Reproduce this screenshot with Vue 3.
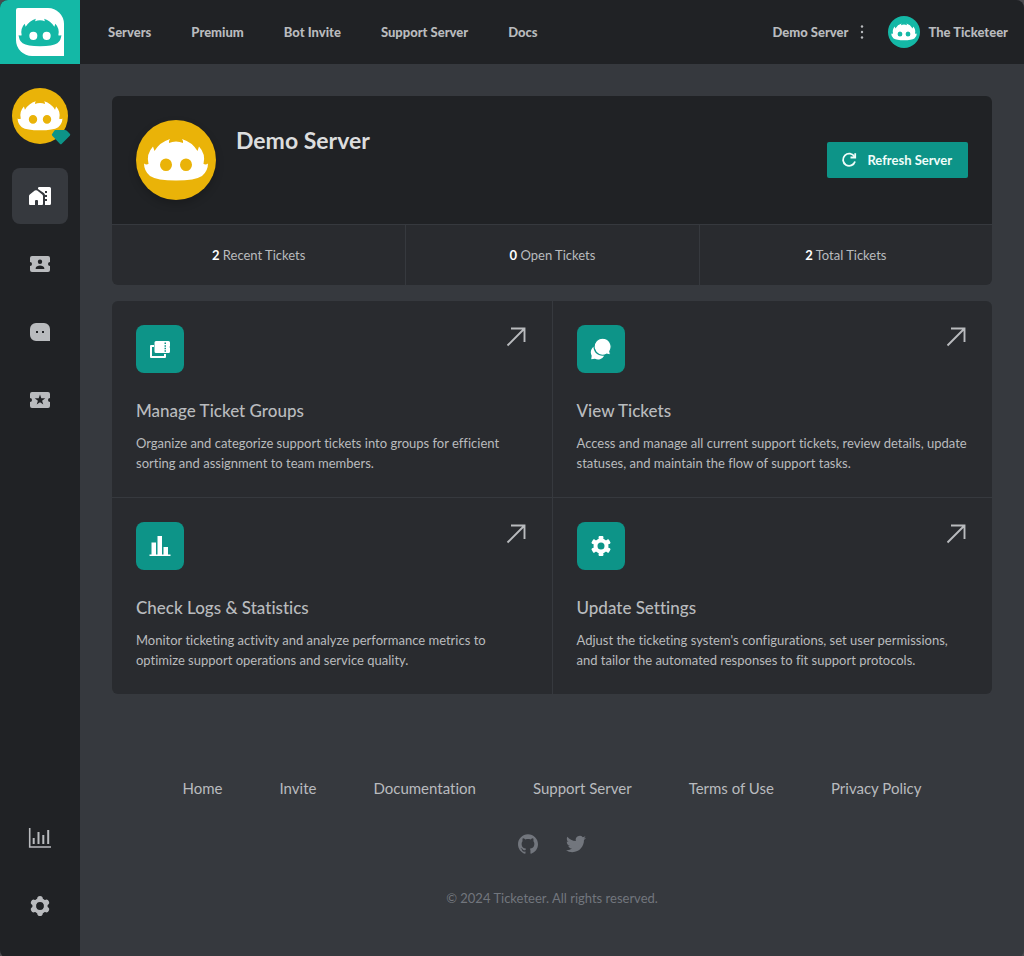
<script setup>
import { h } from 'vue'

const navLinks = ['Servers', 'Premium', 'Bot Invite', 'Support Server', 'Docs']
const footerLinks = ['Home', 'Invite', 'Documentation', 'Support Server', 'Terms of Use', 'Privacy Policy']
const stats = [
  { count: 2, label: 'Recent Tickets' },
  { count: 0, label: 'Open Tickets' },
  { count: 2, label: 'Total Tickets' }
]
const features = [
  {
    icon: 'groups',
    title: 'Manage Ticket Groups',
    text: 'Organize and categorize support tickets into groups for efficient sorting and assignment to team members.'
  },
  {
    icon: 'chats',
    title: 'View Tickets',
    text: 'Access and manage all current support tickets, review details, update statuses, and maintain the flow of support tasks.'
  },
  {
    icon: 'bars',
    title: 'Check Logs & Statistics',
    text: 'Monitor ticketing activity and analyze performance metrics to optimize support operations and service quality.'
  },
  {
    icon: 'cog',
    title: 'Update Settings',
    text: "Adjust the ticketing system's configurations, set user permissions, and tailor the automated responses to fit support protocols."
  }
]

const mascotPath =
  'M8 43.5Q10 45 12.5 44Q10 34 17 26.5L18.5 31Q24 22 34 19Q32.5 21 33 23Q36 21.5 40 21.5Q44 21.5 47 23Q47.5 21 46 19Q56 22 61.500 31L63 26.500Q70 34 67.500 44Q70 45 72 43.500Q72 51 66 56Q59 60.500 40 60.500Q21 60.500 14 56Q8 51 8 43.500Z' +
  'M30 38.500a6 6.300 0 1 0 0 12.600a6 6.300 0 1 0 0-12.600Z' +
  'M50 38.500a6 6.300 0 1 0 0 12.600a6 6.300 0 1 0 0-12.600Z'

const Mascot = (props) =>
  h('svg', { viewBox: props.box || '0 0 80 80', fill: 'currentColor', 'aria-hidden': 'true' }, [
    h('path', { d: mascotPath, 'fill-rule': 'evenodd' })
  ])
Mascot.props = ['box']
</script>

<template>
  <div class="app">
    <aside class="sidebar">
      <a class="logo" href="#" aria-label="Ticketeer">
        <span class="logo-mark"><Mascot box="4 3 72 72" /></span>
      </a>
      <nav class="side-nav" aria-label="Server">
        <a class="server" href="#" aria-label="Demo Server">
          <Mascot />
          <svg class="gem" viewBox="0 0 20 16" aria-hidden="true">
            <path d="M4 1h10q1 0 1.800.8l3 3q1 1 0 2l-8 8q-1 1-2 0l-7.500-8q-1-1 0-2l2-3q.5-.8.7-.8z" fill="#0d9488" />
          </svg>
        </a>
        <a class="side-link active" href="#" aria-label="Overview">
          <svg viewBox="0 0 24 24" fill="currentColor">
            <path d="M1 12q0-1 .8-1.600l5-3.800q1.200-.9 2.400 0l5 3.800q.8.600.8 1.600v8q0 1-1 1h-4v-4q0-1-1-1h-1q-1 0-1 1v4H2q-1 0-1-1z" />
            <path fill-rule="evenodd" d="M10 4.200q0-1.200 1.200-1.200H21.500q1.500 0 1.500 1.500v15q0 1.500-1.500 1.500H17v-9.500q0-1.500-1.200-2.400L10 5zM17 7h2v2h-2zM17 11h2v2h-2zM17 15h2v2h-2z" />
          </svg>
        </a>
        <a class="side-link" href="#" aria-label="Ticket groups">
          <svg viewBox="0 0 24 24" fill="currentColor">
            <path fill-rule="evenodd" d="M4 4h16a2 2 0 0 1 2 2v4a2 2 0 0 0 0 4v4a2 2 0 0 1-2 2H4a2 2 0 0 1-2-2v-4a2 2 0 0 0 0-4V6a2 2 0 0 1 2-2zM12 7.500a2.200 2.200 0 1 0 0 4.400a2.200 2.200 0 1 0 0-4.400zM7.700 17v-1c0-1.600 2.500-2.500 4.300-2.500s4.300.9 4.300 2.500v1z" />
          </svg>
        </a>
        <a class="side-link" href="#" aria-label="Tickets">
          <svg viewBox="0 0 24 24" fill="currentColor">
            <path fill-rule="evenodd" d="M8 3h8a6 6 0 0 1 6 6v12H8a6 6 0 0 1-6-6V9a6 6 0 0 1 6-6zM8 11v2h2v-2zM14 11v2h2v-2z" />
          </svg>
        </a>
        <a class="side-link" href="#" aria-label="Premium">
          <svg viewBox="0 0 24 24" fill="currentColor">
            <path fill-rule="evenodd" d="M4 4h16a2 2 0 0 1 2 2v4a2 2 0 0 0 0 4v4a2 2 0 0 1-2 2H4a2 2 0 0 1-2-2v-4a2 2 0 0 0 0-4V6a2 2 0 0 1 2-2zM12 6.500l1.300 3.700 4 .1-3.200 2.400 1.200 3.800-3.300-2.300-3.300 2.300 1.200-3.800-3.200-2.400 4-.1z" />
          </svg>
        </a>
        <a class="side-link push" href="#" aria-label="Statistics">
          <svg viewBox="0 0 24 24" fill="none" stroke="currentColor" stroke-width="2">
            <path d="M1.700 2v19H23" stroke-width="1.600" />
            <path d="M5.700 12v6M10.500 6v12M15.300 9v9M20.200 4v14" />
          </svg>
        </a>
        <a class="side-link" href="#" aria-label="Settings">
          <svg viewBox="0 0 24 24" fill="none" stroke="currentColor">
            <circle cx="12" cy="12" r="5.800" stroke-width="3.800" />
            <path d="M12 5V4.800M12 19v.2M18.100 8.500l.2-.1M5.900 15.500l-.2.1M18.100 15.500l.2.100M5.900 8.500l-.2-.1" stroke-width="5.600" stroke-linecap="round" />
          </svg>
        </a>
      </nav>
    </aside>

    <div class="page">
      <header class="topbar">
        <nav class="top-nav" aria-label="Main">
          <a v-for="link in navLinks" :key="link" href="#">{{ link }}</a>
        </nav>
        <div class="account">
          <button class="switcher" type="button">
            Demo Server
            <svg viewBox="0 0 4 16" fill="currentColor" aria-hidden="true">
              <circle cx="2" cy="2.500" r="1.200" /><circle cx="2" cy="8" r="1.200" /><circle cx="2" cy="13.500" r="1.200" />
            </svg>
          </button>
          <a class="user" href="#"><span class="user-avatar"><Mascot /></span>The Ticketeer</a>
        </div>
      </header>

      <main>
        <section class="overview">
          <div class="overview-head">
            <span class="avatar"><Mascot /></span>
            <h1>Demo Server</h1>
            <button class="refresh" type="button">
              <svg viewBox="0 0 16 16" fill="none" stroke="currentColor" stroke-width="1.800" aria-hidden="true">
                <path d="M13.500 4.800A6.100 6.100 0 1 0 14 9.500" />
                <path d="M14.200 1.200V5.500H9.500" />
              </svg>
              Refresh Server
            </button>
          </div>
          <div class="stats">
            <p v-for="stat in stats" :key="stat.label"><b>{{ stat.count }}</b> {{ stat.label }}</p>
          </div>
        </section>

        <section class="features">
          <a v-for="item in features" :key="item.title" class="feature" href="#">
            <span class="feature-top">
              <span class="tile">
                <svg v-if="item.icon === 'groups'" viewBox="0 0 24 24" fill="currentColor">
                  <path d="M6 9H3v11h14v-3" fill="none" stroke="currentColor" stroke-width="2" stroke-linejoin="round" />
                  <path fill-rule="evenodd" d="M8 4h12.500q1.500 0 1.500 1.500V9q-1 1 0 2v3.500q0 1.500-1.500 1.500H8q-1.500 0-1.500-1.500v-9Q6.500 4 8 4zM16.500 5.500V7H18V5.500zM16.500 8.200v1.500H18V8.200zM16.500 10.800v1.500H18v-1.500zM16.500 13.300v1.500H18v-1.500z" />
                </svg>
                <svg v-else-if="item.icon === 'chats'" viewBox="0 0 24 24" fill="currentColor">
                  <path d="M8.500 8.500a6.800 6.800 0 0 0-5.800 10.200L2.200 22.300l3.700-.5A6.800 6.800 0 0 0 15 19z" />
                  <path d="M13.600 1.200a8.500 8.500 0 1 0 4 16l3.900.8-.7-3.800A8.500 8.500 0 0 0 13.600 1.200z" stroke="#0d9488" stroke-width="1.200" />
                </svg>
                <svg v-else-if="item.icon === 'bars'" viewBox="0 0 24 24" fill="currentColor">
                  <path d="M1.500 20.500h2v-12H8v12h1.500V2H14v18.500h1.500V13H20v7.500h2.500V22h-21z" />
                </svg>
                <svg v-else viewBox="0 0 24 24" fill="none" stroke="currentColor">
                  <circle cx="12" cy="12" r="5.500" stroke-width="4" />
                  <path d="M12 6V3M12 18v3M17.200 9l2.600-1.500M6.800 15l-2.600 1.500M17.200 15l2.600 1.500M6.800 9L4.200 7.500" stroke-width="4.600" />
                  <path d="M10.600 3h2.800M10.600 21h2.800M19.100 6.300l1.400 2.400M3.500 15.300l1.400 2.400M20.500 15.300l-1.400 2.400M4.900 6.300L3.500 8.700" stroke-width="2" stroke-linecap="round" />
                </svg>
              </span>
              <svg class="arrow" viewBox="0 0 24 24" fill="none" stroke="currentColor" stroke-width="1.900" aria-hidden="true">
                <path d="M3.500 20.500L20.500 3.500M7 3.500H20.500V17" />
              </svg>
            </span>
            <h2>{{ item.title }}</h2>
            <p>{{ item.text }}</p>
          </a>
        </section>
      </main>

      <footer>
        <nav class="footer-nav" aria-label="Footer">
          <a v-for="link in footerLinks" :key="link" href="#">{{ link }}</a>
        </nav>
        <div class="social">
          <a href="#" aria-label="GitHub">
            <svg viewBox="0 0 24 24" fill="currentColor"><path d="M12 .297c-6.630 0-12 5.373-12 12 0 5.303 3.438 9.800 8.205 11.385.6.113.82-.258.82-.577 0-.285-.01-1.040-.015-2.040-3.338.724-4.042-1.610-4.042-1.610C4.422 18.070 3.633 17.700 3.633 17.700c-1.087-.744.084-.729.084-.729 1.205.084 1.838 1.236 1.838 1.236 1.070 1.835 2.809 1.305 3.495.998.108-.776.417-1.305.76-1.605-2.665-.3-5.466-1.332-5.466-5.930 0-1.310.465-2.380 1.235-3.220-.135-.303-.54-1.523.105-3.176 0 0 1.005-.322 3.300 1.230.96-.267 1.980-.399 3-.405 1.020.006 2.040.138 3 .405 2.280-1.552 3.285-1.230 3.285-1.230.645 1.653.24 2.873.12 3.176.765.84 1.230 1.910 1.230 3.220 0 4.610-2.805 5.625-5.475 5.920.42.36.81 1.096.81 2.220 0 1.606-.015 2.896-.015 3.286 0 .315.21.69.825.57C20.565 22.092 24 17.592 24 12.297c0-6.627-5.373-12-12-12" /></svg>
          </a>
          <a href="#" aria-label="Twitter">
            <svg viewBox="0 0 24 24" fill="currentColor"><path d="M23.953 4.570a10 10 0 01-2.825.775 4.958 4.958 0 002.163-2.723c-.951.555-2.005.959-3.127 1.184a4.920 4.920 0 00-8.384 4.482C7.690 8.095 4.067 6.130 1.640 3.162a4.822 4.822 0 00-.666 2.475c0 1.710.87 3.213 2.188 4.096a4.904 4.904 0 01-2.228-.616v.06a4.923 4.923 0 003.946 4.827 4.996 4.996 0 01-2.212.085 4.936 4.936 0 004.604 3.417 9.867 9.867 0 01-6.102 2.105c-.39 0-.779-.023-1.170-.067a13.995 13.995 0 007.557 2.209c9.053 0 13.998-7.496 13.998-13.985 0-.21 0-.42-.015-.63A9.935 9.935 0 0024 4.590z" /></svg>
          </a>
        </div>
        <p>© 2024 Ticketeer. All rights reserved.</p>
      </footer>
    </div>
  </div>
</template>

<style>
body {
  margin: 0;
  background: #4a4a4e;
}
</style>

<style scoped>
.app {
  display: flex;
  min-height: 100vh;
  overflow: hidden;
  border-radius: 8px;
  background: #36393e;
  color: #b9bbbe;
  font-family: Lato, "Open Sans", sans-serif;
  font-size: 13px;
  line-height: 20px;
  font-variant-ligatures: none;
}
a {
  color: inherit;
  text-decoration: none;
}
button {
  border: 0;
  font: inherit;
  cursor: pointer;
}
h1,
h2,
p {
  margin: 0;
}
svg {
  display: block;
}
.sidebar {
  display: flex;
  flex-direction: column;
  flex: none;
  width: 80px;
  background: #202225;
}
.logo {
  display: flex;
  justify-content: center;
  align-items: center;
  height: 64px;
  background: #14b8a6;
}
.logo-mark {
  width: 48px;
  height: 48px;
  border-radius: 2px 16px 0 16px;
  background: #fff;
  color: #14b8a6;
}
.side-nav {
  display: flex;
  flex-direction: column;
  align-items: center;
  flex: 1;
  gap: 12px;
  padding: 24px 0;
}
.server {
  position: relative;
  width: 56px;
  height: 56px;
  margin-bottom: 12px;
  border-radius: 50%;
  background: #eab308;
  color: #fff;
}
.gem {
  position: absolute;
  right: -3px;
  bottom: -1px;
  width: 20px;
  height: 16px;
}
.side-link {
  display: grid;
  place-items: center;
  width: 56px;
  height: 56px;
  border-radius: 8px;
}
.side-link svg {
  width: 24px;
  height: 24px;
}
.active {
  background: #36393e;
  color: #fff;
}
.push {
  margin-top: auto;
}
.page {
  flex: 1;
  min-width: 0;
}
.topbar {
  display: flex;
  align-items: center;
  justify-content: space-between;
  height: 64px;
  padding: 0 16px 0 28px;
  background: #202225;
  font-weight: 900;
}
.top-nav {
  display: flex;
  gap: 40px;
}
.account,
.switcher,
.user {
  display: flex;
  align-items: center;
}
.account {
  gap: 24px;
}
.switcher {
  gap: 12px;
  padding: 0;
  background: none;
  color: inherit;
}
.switcher svg {
  width: 4px;
  height: 16px;
}
.user {
  gap: 8px;
}
.user-avatar {
  width: 32px;
  height: 32px;
  border-radius: 50%;
  background: #14b8a6;
  color: #fff;
}
main {
  display: grid;
  gap: 16px;
  padding: 32px;
}
.overview,
.features {
  overflow: hidden;
  border-radius: 6px;
}
.overview-head {
  display: flex;
  align-items: center;
  gap: 20px;
  padding: 24px;
  background: #202225;
}
.avatar {
  width: 80px;
  height: 80px;
  border-radius: 50%;
  background: #eab308;
  color: #fff;
  box-shadow: 0 4px 8px rgb(0 0 0 / 20%);
}
h1 {
  flex: 1;
  align-self: flex-start;
  color: #dcddde;
  font-size: 23px;
  font-weight: 700;
  line-height: 40px;
}
.refresh {
  display: flex;
  align-items: center;
  gap: 10px;
  padding: 8px 16px 8px 14px;
  border-radius: 2px;
  background: #0d9488;
  color: #f0fdfa;
  font-weight: 700;
}
.refresh svg {
  width: 16px;
  height: 16px;
}
.stats {
  display: grid;
  grid-template-columns: repeat(3, 1fr);
  border-top: 1px solid #36393e;
  background: #292b2f;
  text-align: center;
}
.stats p {
  padding: 20px;
}
.stats p + p {
  border-left: 1px solid #36393e;
}
.stats b {
  color: #fff;
}
.features {
  display: grid;
  grid-template-columns: 1fr 1fr;
  gap: 1px;
  background: #36393e;
}
.feature {
  padding: 24px;
  background: #292b2f;
}
.feature-top {
  display: flex;
  justify-content: space-between;
  margin-bottom: 24px;
}
.tile {
  display: grid;
  place-items: center;
  width: 48px;
  height: 48px;
  border-radius: 8px;
  background: #0d9488;
  color: #fff;
}
.tile svg,
.arrow {
  width: 24px;
  height: 24px;
}
h2 {
  margin-bottom: 8px;
  font-size: 17px;
  font-weight: 500;
  line-height: 28px;
}
footer {
  display: grid;
  justify-items: center;
  padding: 50px 32px;
  font-size: 15px;
  line-height: 24px;
}
.footer-nav {
  display: flex;
  gap: 57px;
}
.social {
  display: flex;
  gap: 28px;
  margin: 34px 0;
  color: #72767d;
}
.social svg {
  width: 20px;
  height: 20px;
}
footer p {
  color: #72767d;
  font-size: 13px;
  line-height: 20px;
}
</style>
